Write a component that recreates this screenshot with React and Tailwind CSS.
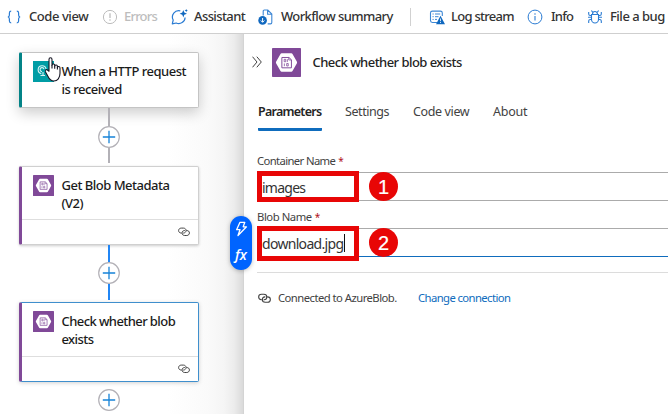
import React from "react";

function BlobIcon({ className }) {
  return (
    <svg viewBox="0 0 30 30" className={className}>
      <rect width="30" height="30" rx="0.8" fill="#804998" />
      <path d="M10 5.5h10q.8 0 1.2.7l4.6 8.1q.3.7 0 1.4l-4.6 8.1q-.4.7-1.2.7H10q-.8 0-1.2-.7l-4.6-8.1q-.3-.7 0-1.4l4.6-8.1q.4-.7 1.2-.7z" fill="#fff" />
      <path d="M10.2 9.8h7.3l2.6 2.4v8.3h-9.9z" fill="none" stroke="#804998" strokeWidth="1" />
      <path d="M17.3 9.8v2.6h2.8M12.6 11.7h1.6v2.5h-1.6zM15.9 11.6v2.8M12.8 16v2.8M15.2 16h1.6v2.6h-1.6z" fill="none" stroke="#804998" strokeWidth=".8" />
    </svg>
  );
}

function LinkIcon({ className }) {
  return (
    <svg viewBox="0 0 12 10" className={className} fill="none" stroke="#424242" strokeWidth="1" strokeLinecap="round">
      <path d="M3.2 6.1C1.5 6 .6 4.9.6 3.6.6 2.1 1.8 1.1 3.3 1.1h2.1c1.6 0 2.7 1.1 2.7 2.4 0 1.4-1.1 2.5-2.5 2.6" />
      <path d="M8.8 3.5c1.7 0 2.6 1.1 2.6 2.4 0 1.5-1.1 2.6-2.6 2.6H6.7C5.1 8.5 4 7.4 4 6c0-1.4 1-2.4 2.4-2.5" />
    </svg>
  );
}

function BracesIcon() {
  return (
    <svg viewBox="0 0 14 16" className="h-4 w-3.5 shrink-0" fill="none" stroke="#2b7cd3" strokeWidth="1.2">
      <path d="M4.2 2.2C2.5 2.2 2.4 3 2.4 4v2c0 1.2-.4 1.8-1.5 2 1.1.2 1.5.8 1.5 2v2c0 1 .1 1.8 1.8 1.8M9.8 2.2c1.7 0 1.8.8 1.8 1.8v2c0 1.2.4 1.8 1.5 2-1.1.2-1.5.8-1.5 2v2c0 1-.1 1.8-1.8 1.8" />
    </svg>
  );
}

function ErrorsIcon() {
  return (
    <svg viewBox="0 0 16 16" className="size-4 shrink-0" fill="none" stroke="#bdbdbd">
      <circle cx="8" cy="8" r="6.6" />
      <path d="M8 4.3v4.6" strokeWidth="1.3" />
      <circle cx="8" cy="11" r=".8" fill="#bdbdbd" stroke="none" />
    </svg>
  );
}

function AssistantIcon() {
  return (
    <svg viewBox="0 0 17 16" className="h-4 w-[17px] shrink-0">
      <path d="M9.3 1.9A6.3 6.3 0 0 0 2.2 11l-.9 3.9 3.9-.9a6.3 6.3 0 0 0 8.9-5.6" fill="none" stroke="#2b7cd3" strokeWidth="1.2" strokeLinejoin="round" />
      <path d="M12.3 1l1 2.6L16 4.7l-2.7 1-1 2.7-1-2.7-2.7-1 2.7-1.1zM15.2 0l.5 1.1 1.2.5-1.2.5-.5 1.2-.5-1.2-1.1-.5 1.1-.5z" fill="#1068bf" />
    </svg>
  );
}

function WorkflowIcon() {
  return (
    <svg viewBox="0 0 15 16" className="h-4 w-[15px] shrink-0" fill="none">
      <path d="M5.2 6.5V2.1c0-.7.4-1.1 1.1-1.1h3.5l4 4v8.6c0 .8-.5 1.3-1.3 1.3H9.7M9.6 1v4.2h4.2" stroke="#3c87d5" strokeWidth="1.1" />
      <circle cx="4.6" cy="11.4" r="4.3" fill="#1068bf" />
      <path d="M4.6 9v4.1M2.8 11.5l1.8 1.8 1.8-1.8" stroke="#fff" strokeWidth="1" />
    </svg>
  );
}

function LogIcon() {
  return (
    <svg viewBox="0 0 16 16" className="size-4 shrink-0" fill="none">
      <path d="M8 13.5H3.4C2.2 13.5 1.5 12.8 1.5 11.6V4c0-1.2.7-1.9 1.9-1.9h8c1.2 0 1.9.7 1.9 1.9v3" stroke="#3c87d5" strokeWidth="1.1" />
      <path d="M3.5 5h1.2M6 5h5.2M3.5 7.7h1.2M6 7.7h3.5M3.5 10.4h1.2M6 10.4h2" stroke="#3c87d5" />
      <path d="M11.5 6.7L16 15.2H7z" fill="#1068bf" />
      <path d="M11.5 9.5v2.7M11.5 13v1" stroke="#fff" strokeWidth=".8" />
    </svg>
  );
}

function InfoIcon() {
  return (
    <svg viewBox="0 0 16 16" className="size-4 shrink-0" fill="none" stroke="#2b7cd3">
      <circle cx="8" cy="8" r="6.9" />
      <path d="M8 7v4.5" strokeWidth="1.1" />
      <circle cx="8" cy="4.9" r=".75" fill="#2b7cd3" stroke="none" />
    </svg>
  );
}

function BugIcon() {
  return (
    <svg viewBox="0 0 16 16" className="size-4 shrink-0" fill="none" stroke="#2b7cd3" strokeWidth="1.1">
      <path d="M4.5 5.5h7v4.7a3.5 3.8 0 0 1-7 0zM5.5 5.3a2.5 2.8 0 0 1 5 0M5.6 3.1L4.4 1.5M10.4 3.1l1.2-1.6M4.5 8.3H1M11.5 8.3H15M4.5 6.5H3.3C2.2 6.5 1.7 5.9 1.7 5V3M11.5 6.5h1.2c1.1 0 1.6-.6 1.6-1.5V3M4.6 10.5H3.3c-1.1 0-1.6.6-1.6 1.5v2M11.4 10.5h1.3c1.1 0 1.6.6 1.6 1.5v2" />
    </svg>
  );
}

function ToolButton({ icon, label, className }) {
  return (
    <button className={"flex shrink-0 items-center whitespace-nowrap text-[13px] font-medium " + className}>
      {icon}
      <span>{label}</span>
    </button>
  );
}

function Toolbar() {
  return (
    <header className="flex h-[34px] items-center border-b border-[#cfcfcf] bg-white pl-[7px] text-[#333]">
      <ToolButton icon={<BracesIcon />} label="Code view" className="w-[95px] gap-2 tracking-[-0.44px]" />
      <ToolButton icon={<ErrorsIcon />} label="Errors" className="w-[69px] gap-[6px] tracking-[-0.8px] text-[#bdbdbd]" />
      <ToolButton icon={<AssistantIcon />} label="Assistant" className="w-[87px] gap-[6px] tracking-[-0.6px]" />
      <ToolButton icon={<WorkflowIcon />} label="Workflow summary" className="w-[152px] gap-2 tracking-[-0.6px]" />
      <span className="mr-[18px] h-[18px] w-px bg-[#d1d1d1]" />
      <ToolButton icon={<LogIcon />} label="Log stream" className="w-[98px] gap-[6px] tracking-[-0.72px]" />
      <ToolButton icon={<InfoIcon />} label="Info" className="w-[60px] gap-2 tracking-[-0.8px]" />
      <ToolButton icon={<BugIcon />} label="File a bug" className="gap-[7px] tracking-[-0.5px]" />
    </header>
  );
}

function AddButton() {
  return (
    <svg viewBox="0 0 22 22" className="size-[22px] shrink-0" fill="none">
      <circle cx="11" cy="11" r="10.3" fill="#fff" stroke="#b3b1b7" strokeWidth="1.2" />
      <path d="M4.8 11h12.4M11 4.8v12.4" stroke="#1683d8" strokeWidth="1.3" />
    </svg>
  );
}

function ManualTriggerIcon() {
  return (
    <div className="relative size-[21px] shrink-0 bg-[#009da5]">
      <svg viewBox="0 0 21 21" className="size-[21px]" fill="none" stroke="#d8f3f4" strokeWidth="1.1">
        <path d="M8.3 12.6a4 4 0 1 1 4.8-4.5M9 10.6a2 2 0 1 1 2-2.5M10 11v3.500M7.500 14.500h4.500" />
      </svg>
      <svg viewBox="0 0 17 25" className="absolute left-[12px] top-[-4px] h-[25px] w-[17px]">
        <path d="M3.200 14.200V2.500c0-2.300 3-2.300 3 0v5.700c.3-1.800 2.700-1.500 2.700.1v.7c.5-1.500 2.700-1.200 2.700.4v.8c.6-1.200 2.600-.8 2.600.8v5.300c0 4.400-2.400 7.700-6.100 7.700-3.200 0-4.700-2-6-4.800L-.4 14.800c-.9-1.800 1.200-2.800 2.400-1.500z" fill="#fff" stroke="#151523" strokeWidth="1.1" strokeLinejoin="round" transform="translate(.8 0)" />
        <path d="M7 8v3.500M9.700 8.700v3M12.400 10v2.500" stroke="#151523" strokeWidth="1.1" />
      </svg>
    </div>
  );
}

function Card({ icon, lines, footer, className, tracking }) {
  return (
    <article className={"flex w-[180px] shrink-0 flex-col rounded-[2px] border border-l-[3px] bg-white " + className}>
      <div className="flex flex-1 items-start gap-[7.5px] pl-[11px] pt-2">
        {icon}
        <h3 className={"whitespace-nowrap pt-px text-[13px] font-medium leading-[18px] text-[#1b1b1b] " + tracking}>
          {lines.map((l) => <span key={l} className="block">{l}</span>)}
        </h3>
      </div>
      {footer && (
        <div className="flex h-[25px] items-center justify-end border-t border-[#dedede] pr-2">
          <LinkIcon className="h-[10px] w-3" />
        </div>
      )}
    </article>
  );
}

function Canvas() {
  return (
    <section className="flex h-[380px] w-[243px] shrink-0 flex-col bg-[linear-gradient(90deg,#fff_0,#fff_168px,#fafafa_208px,#f5f5f5_224px,#ececec_234px,#dadada_243px)] pl-[19px] pt-[18px]">
      <div className="flex w-[180px] flex-col items-center">
        <Card
          icon={<ManualTriggerIcon />}
          lines={["When a HTTP request", "is received"]}
          tracking="tracking-[-0.49px]"
          className="h-[56px] border-[#c4c4c4] border-l-[#038387] shadow-[0_5px_14px_rgba(0,0,0,0.2)]"
        />
        <span className="h-[18px] w-[2px] bg-[#b3b1b7]" />
        <AddButton />
        <span className="mb-[3px] h-[15px] w-[2px] bg-[#b3b1b7]" />
        <Card
          icon={<BlobIcon className="size-[21px] shrink-0" />}
          lines={["Get Blob Metadata", "(V2)"]}
          tracking="tracking-[-0.5px]"
          footer
          className="h-[79px] border-[#d0d0d0] border-l-[#804998] shadow-[0_1px_3px_rgba(0,0,0,0.2)]"
        />
        <span className="h-[17px] w-[2px] bg-[#2186f5]" />
        <AddButton />
        <span className="mb-[2px] h-[16px] w-[2px] bg-[#2186f5]" />
        <Card
          icon={<BlobIcon className="size-[21px] shrink-0" />}
          lines={["Check whether blob", "exists"]}
          tracking="tracking-[-0.58px]"
          footer
          className="mb-[7px] h-[80px] border-[#3f8fcd] border-l-[#804998] shadow-[0_1px_4px_rgba(0,0,0,0.18)]"
        />
        <AddButton />
      </div>
    </section>
  );
}

function TokenPicker() {
  return (
    <div className="absolute left-[-14px] top-[182px] flex h-[54px] w-[22px] flex-col items-center justify-between rounded-full bg-[#0064ff] pb-[6px] pt-[5px] shadow-[0_1px_4px_rgba(0,0,0,0.25)]">
      <svg viewBox="0 0 14 16" className="h-4 w-3.5" fill="none" stroke="#fff" strokeWidth="1.3" strokeLinejoin="round">
        <path d="M6 1.3h4.800L9.200 5.800h3.300L4 14.500l2-5.800H2.600z" />
      </svg>
      <span className="font-['Open_Sans',sans-serif] text-[14px] font-semibold italic leading-[18px] text-white">fx</span>
    </div>
  );
}

function Field({ label, value, step, focused }) {
  return (
    <div className="h-[56px]">
      <div className="flex h-[17px] items-center gap-[3px] whitespace-nowrap pb-px text-[11.3px] leading-[16px] text-[#424242]">
        <span className={focused ? "tracking-[-0.46px]" : "tracking-[-0.63px]"}>{label}</span>
        <span className="text-[10px] text-[#b10e1c]">*</span>
      </div>
      <div className={"mt-[2px] flex h-[29px] items-center border-y border-t-[#ababab] " + (focused ? "border-b-[#0f6cbd]" : "border-b-[#ababab]")}>
        <div className={"flex w-[102px] shrink-0 items-center border-[5px] border-[#e80606] text-[14px] text-[#333] " + (focused ? "mt-px h-[35px]" : "h-[31px] pt-px")}>
          <span className={focused ? "tracking-[-0.69px]" : "tracking-[-0.75px]"}>{value}</span>
          {focused && <span className="ml-px h-[18px] w-px bg-[#111]" />}
        </div>
        <span className="ml-[10px] flex size-[29px] shrink-0 items-center justify-center rounded-full bg-[#e80606] font-['Liberation_Sans',sans-serif] text-[20px] leading-none text-white [-webkit-text-stroke:0.2px_white]">
          {step}
        </span>
      </div>
    </div>
  );
}

function Panel() {
  return (
    <main className="relative flex h-[380px] flex-1 flex-col border-l border-[#d4d4d4] bg-white">
      <div className="flex h-[56px] items-center pl-2">
        <svg viewBox="0 0 10 12" className="h-3 w-[10px]" fill="none" stroke="#424242" strokeWidth="1">
          <path d="M.5.7L5 6 .5 11.3M4.8.7L9.3 6 4.8 11.3" />
        </svg>
        <BlobIcon className="ml-[10px] size-[29px]" />
        <h2 className="ml-[11.5px] whitespace-nowrap pt-[2px] text-[13px] font-medium tracking-[-0.54px] text-[#242424]">Check whether blob exists</h2>
      </div>
      <nav className="flex h-[41px] items-end whitespace-nowrap pl-[14px] text-[12.5px] text-[#424242]">
        <div className="flex h-[29px] w-[64px] flex-col justify-between rounded-[1px] border-b-[3px] border-[#0f6cbd] pt-px">
          <span className="font-semibold leading-[18px] tracking-[-0.74px] text-[#242424]">Parameters</span>
        </div>
        <span className="ml-[23px] h-[28px] w-[68px] leading-[18px] tracking-[-0.43px]">Settings</span>
        <span className="h-[28px] w-[80px] leading-[18px] tracking-[-0.37px]">Code view</span>
        <span className="h-[28px] leading-[18px] tracking-[-0.25px]">About</span>
      </nav>
      <form className="ml-[13px] mt-[22px]">
        <Field label="Container Name" value="images" step="1" />
        <Field label="Blob Name" value="download.jpg" step="2" focused />
      </form>
      <footer className="ml-[13px] mt-[7px] flex h-[53px] items-center border-t border-[#dcdcdc] pb-px text-[11.3px]">
        <LinkIcon className="ml-px h-[11px] w-[13px]" />
        <span className="ml-[7px] w-[140px] whitespace-nowrap tracking-[-0.55px] text-[#424242]">Connected to AzureBlob.</span>
        <a className="whitespace-nowrap tracking-[-0.6px] text-[#0f6cbd]">Change connection</a>
      </footer>
      <TokenPicker />
    </main>
  );
}

export default function App() {
  return (
    <div className="h-[414px] w-[668px] overflow-hidden bg-white font-['Noto_Sans','Open_Sans',sans-serif]">
      <Toolbar />
      <div className="flex">
        <Canvas />
        <Panel />
      </div>
    </div>
  );
}
